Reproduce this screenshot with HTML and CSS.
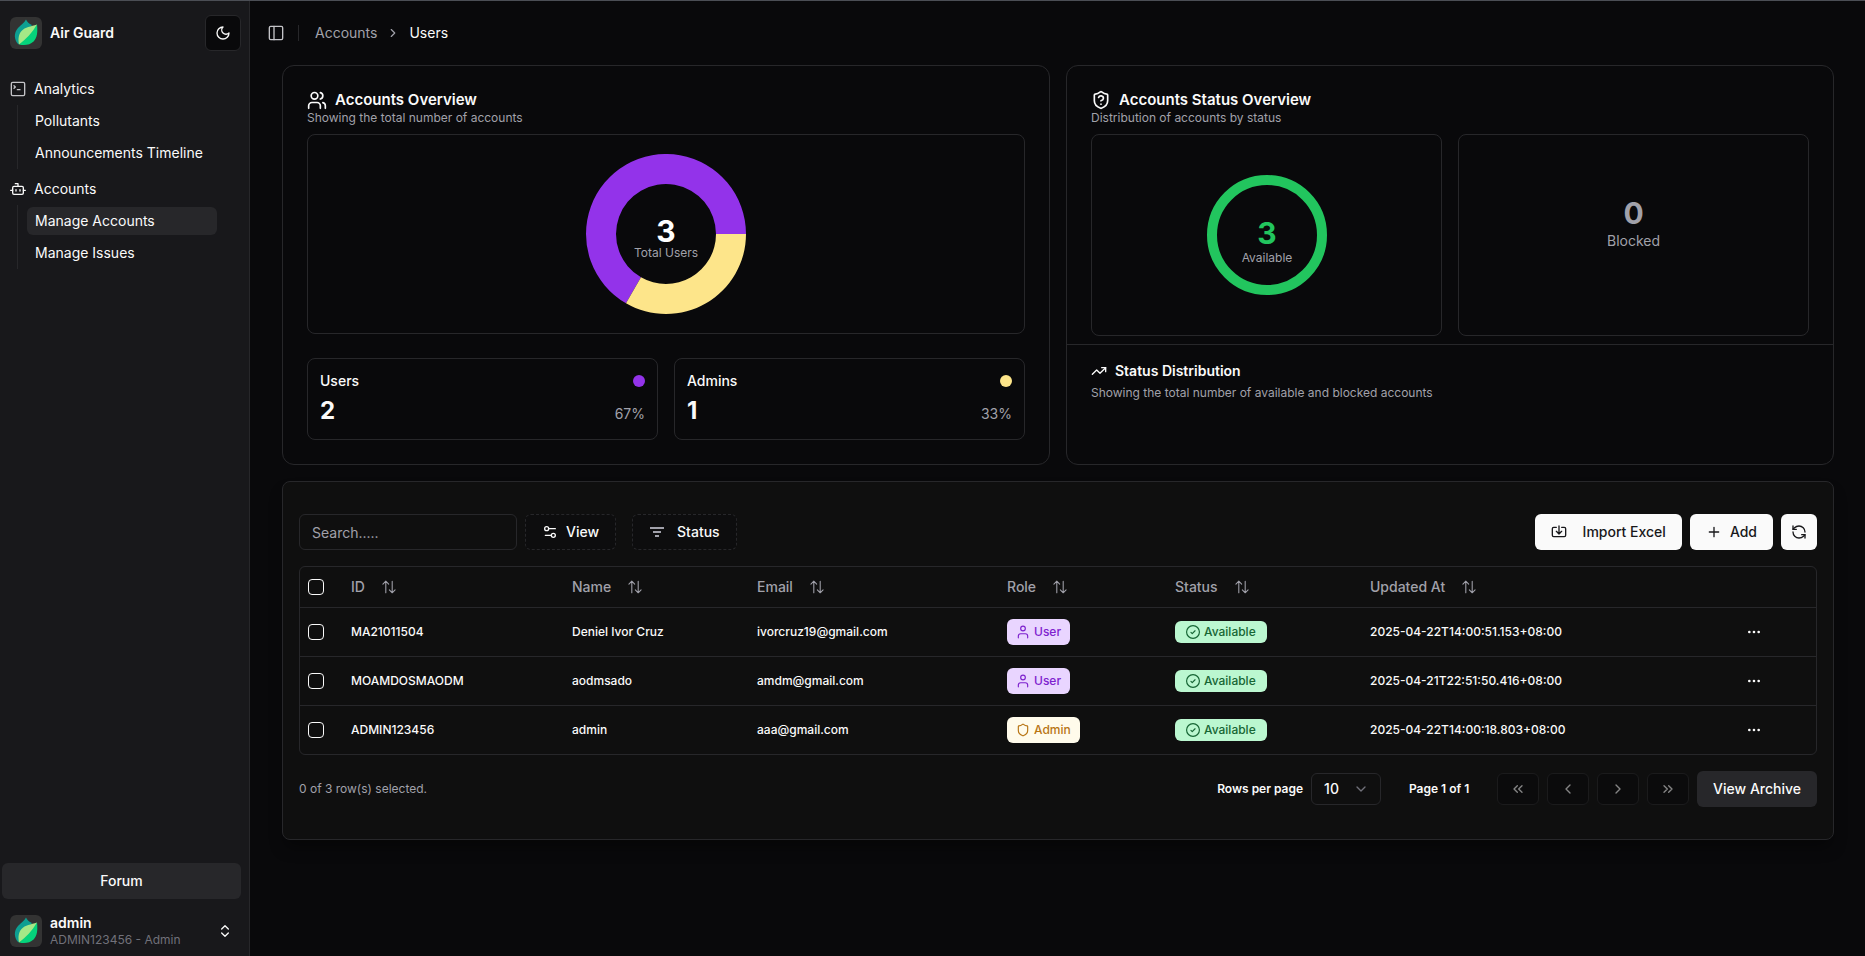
FILE: index.html
```html
<!DOCTYPE html>
<html lang="en">
<head>
	<meta charset="utf-8">
	<title>Air Guard - Users</title>
	<meta name="viewport" content="width=device-width, initial-scale=1">
	<link rel="stylesheet" href="styles.css">
</head>
<body>
	<!-- shared icons -->
	<svg class="sprite" aria-hidden="true">
		<symbol id="logo" viewBox="0 0 32 32">
			<path fill="#0d9f92" d="M16 2.500c-1.500 3.500-5 5-8 8.500-4.500 5-4 12 0.500 16.500L22 8c-3-1.200-4.800-3-6-5.500z"/>
			<path fill="#05d27b" d="M27 7.500c.8 8 .2 13-3.500 17-3.500 3.500-8.500 4.300-14.500 3L27 7.500z"/>
			<path fill="#a5e887" d="M27 7.500C21 9.500 15 10 11.500 14 8.500 17.500 8 22 9 27.500 16 22 22 16 27 7.500z"/>
		</symbol>
		<symbol id="sort" viewBox="0 0 15 15">
			<path d="M4.500 12.800V2M1.800 4.800l2.700-2.700 2.700 2.700M10.500 2.200v10.600M7.800 10.200l2.700 2.700 2.700-2.700"/>
		</symbol>
		<symbol id="user" viewBox="0 0 24 24">
			<circle cx="12" cy="6" r="4"/><path d="M20 22v-3a4 4 0 0 0-4-4H8a4 4 0 0 0-4 4v3"/>
		</symbol>
		<symbol id="shield" viewBox="0 0 24 24">
			<path d="M20 13c0 5-3.500 7.500-7.660 8.950a1 1 0 0 1-.67-.01C7.500 20.500 4 18 4 13V6a1 1 0 0 1 1-1c2 0 4.500-1.200 6.240-2.720a1.170 1.170 0 0 1 1.520 0C14.510 3.810 17 5 19 5a1 1 0 0 1 1 1z"/>
		</symbol>
		<symbol id="check" viewBox="0 0 24 24">
			<circle cx="12" cy="12" r="11"/><path d="m8.500 12.500 2.200 2.200 4.800-4.800"/>
		</symbol>
		<symbol id="dots" viewBox="0 0 24 24">
			<circle cx="5" cy="12" r="1"/><circle cx="12" cy="12" r="1"/><circle cx="19" cy="12" r="1"/>
		</symbol>
	</svg>

	<div class="app">
		<aside class="sidebar">
			<div class="brand">
				<span class="logo"><svg><use href="#logo"/></svg></span>
				<strong>Air Guard</strong>
				<button type="button" class="theme-btn" aria-label="Toggle theme">
					<svg class="icon" viewBox="0 0 24 24"><path d="M12 3a6 6 0 0 0 9 9 9 9 0 1 1-9-9Z"/></svg>
				</button>
			</div>

			<nav class="nav">
				<div class="nav-title">
					<svg class="icon" viewBox="0 0 24 24"><path d="m6 11 2-2-2-2M11 13h4"/><rect width="20" height="20" x="2" y="2" rx="2"/></svg>
					Analytics
				</div>
				<ul>
					<li><a href="#">Pollutants</a></li>
					<li><a href="#">Announcements Timeline</a></li>
				</ul>
				<div class="nav-title">
					<svg class="icon" viewBox="0 0 24 24"><path d="M12 8V4H8M1 14h3M20 14h3M15 13v2M9 13v2"/><rect width="16" height="12" x="4" y="8" rx="2"/></svg>
					Accounts
				</div>
				<ul>
					<li><a href="#" class="active">Manage Accounts</a></li>
					<li><a href="#">Manage Issues</a></li>
				</ul>
			</nav>

			<button type="button" class="forum-btn">Forum</button>
			<button type="button" class="account">
				<span class="logo"><svg><use href="#logo"/></svg></span>
				<span class="account-text">
					<strong>admin</strong>
					<small>ADMIN123456 - Admin</small>
				</span>
				<svg class="icon" viewBox="0 0 24 24"><path d="m7 15 5 5 5-5M7 9l5-5 5 5"/></svg>
			</button>
		</aside>

		<main class="main">
			<header class="topbar">
				<button type="button" class="plain-btn" aria-label="Toggle sidebar">
					<svg class="icon" viewBox="0 0 24 24"><rect width="20" height="20" x="2" y="2" rx="2"/><path d="M9 2v20"/></svg>
				</button>
				<span class="divider"></span>
				<nav class="breadcrumb" aria-label="Breadcrumb">
					<a href="#">Accounts</a>
					<svg class="icon" viewBox="0 0 24 24"><path d="m9 18 6-6-6-6"/></svg>
					<span>Users</span>
				</nav>
			</header>

			<div class="content">
				<div class="overview">
					<section class="card">
						<h2>
							<svg class="icon" viewBox="0 0 24 24"><path d="M16 22v-3a4 4 0 0 0-4-4H6a4 4 0 0 0-4 4v3"/><circle cx="9" cy="7" r="4"/><path d="M22 22v-3a4 4 0 0 0-3-3.870M16 3.130a4 4 0 0 1 0 7.750"/></svg>
							Accounts Overview
						</h2>
						<p class="sub">Showing the total number of accounts</p>
						<div class="box chart-box">
							<svg class="donut" viewBox="0 0 160 160">
								<path fill="#9333ea" d="M160 80A80 80 0 1 0 40 149.280L55 123.300A50 50 0 1 1 130 80z"/>
								<path fill="#fde58a" d="M160 80A80 80 0 0 1 40 149.280L55 123.300A50 50 0 0 0 130 80z"/>
								<text x="80" y="88" class="chart-num">3</text>
								<text x="80" y="103" class="chart-label">Total Users</text>
							</svg>
						</div>
						<div class="pair totals">
							<div class="box total">
								<div class="line"><span>Users</span><i class="dot purple"></i></div>
								<div class="line"><b>2</b><span class="percent">67%</span></div>
							</div>
							<div class="box total">
								<div class="line"><span>Admins</span><i class="dot yellow"></i></div>
								<div class="line"><b>1</b><span class="percent">33%</span></div>
							</div>
						</div>
					</section>

					<section class="card">
						<h2>
							<svg class="icon" viewBox="0 0 24 24"><path d="M20 13c0 5-3.500 7.500-7.660 8.950a1 1 0 0 1-.67-.01C7.500 20.500 4 18 4 13V6a1 1 0 0 1 1-1c2 0 4.500-1.200 6.240-2.720a1.170 1.170 0 0 1 1.520 0C14.510 3.810 17 5 19 5a1 1 0 0 1 1 1z"/><path d="M9.100 9a3 3 0 0 1 5.820 1c0 2-3 3-3 3M12 17h.01"/></svg>
							Accounts Status Overview
						</h2>
						<p class="sub">Distribution of accounts by status</p>
						<div class="pair">
							<div class="box status-box">
								<svg class="ring" viewBox="0 0 120 120">
									<circle cx="60" cy="60" r="55" fill="none" stroke="#22c55e" stroke-width="10"/>
									<text x="60" y="69" class="chart-num green">3</text>
									<text x="60" y="87" class="chart-label">Available</text>
								</svg>
							</div>
							<div class="box blocked">
								<b>0</b>
								<span>Blocked</span>
							</div>
						</div>
						<footer class="card-footer">
							<h3>
								<svg class="icon" viewBox="0 0 24 24"><path d="m22 7-8.500 8.500-5-5L2 17"/><path d="M16 7h6v6"/></svg>
								Status Distribution
							</h3>
							<p class="sub">Showing the total number of available and blocked accounts</p>
						</footer>
					</section>
				</div>

				<section class="table-card">
					<div class="toolbar">
						<input type="text" class="search" placeholder="Search....." aria-label="Search">
						<button type="button" class="btn dashed">
							<svg class="icon" viewBox="0 0 24 24"><path d="M20 7h-9M14 17H5"/><circle cx="17" cy="17" r="3"/><circle cx="7" cy="7" r="3"/></svg>
							View
						</button>
						<button type="button" class="btn dashed status">
							<svg class="icon bars" viewBox="0 0 16 16"><path d="M1 4h14M4 8h8M6 12h4"/></svg>
							Status
						</button>
						<div class="actions">
							<button type="button" class="btn light import">
								<svg class="icon" viewBox="0 0 24 24"><path d="M12 3v12M8 11l4 4 4-4M8 5H4a2 2 0 0 0-2 2v10a2 2 0 0 0 2 2h16a2 2 0 0 0 2-2V7a2 2 0 0 0-2-2h-4"/></svg>
								Import Excel
							</button>
							<button type="button" class="btn light">
								<svg class="icon" viewBox="0 0 24 24"><path d="M5 12h14M12 5v14"/></svg>
								Add
							</button>
							<button type="button" class="btn light square" aria-label="Refresh">
								<svg class="icon" viewBox="0 0 24 24"><path d="M21 12a9 9 0 0 0-9-9 9.750 9.750 0 0 0-6.740 2.740L3 8"/><path d="M3 3v5h5M3 12a9 9 0 0 0 9 9 9.750 9.750 0 0 0 6.740-2.740L21 16"/><path d="M16 16h5v5"/></svg>
							</button>
						</div>
					</div>

					<div class="table-wrap">
						<table>
							<colgroup>
								<col class="c-check"><col class="c-id"><col class="c-name"><col class="c-email"><col class="c-role"><col class="c-status"><col class="c-date"><col class="c-menu">
							</colgroup>
							<thead>
								<tr>
									<th><input type="checkbox" aria-label="Select all"></th>
									<th><button type="button">ID <svg><use href="#sort"/></svg></button></th>
									<th><button type="button">Name <svg><use href="#sort"/></svg></button></th>
									<th><button type="button">Email <svg><use href="#sort"/></svg></button></th>
									<th><button type="button">Role <svg><use href="#sort"/></svg></button></th>
									<th><button type="button">Status <svg><use href="#sort"/></svg></button></th>
									<th><button type="button">Updated At <svg><use href="#sort"/></svg></button></th>
									<th></th>
								</tr>
							</thead>
							<tbody>
								<tr>
									<td><input type="checkbox" aria-label="Select MA21011504"></td>
									<td>MA21011504</td>
									<td>Deniel Ivor Cruz</td>
									<td>ivorcruz19@gmail.com</td>
									<td><span class="badge user"><svg class="icon"><use href="#user"/></svg>User</span></td>
									<td><span class="badge available"><svg class="icon"><use href="#check"/></svg>Available</span></td>
									<td>2025-04-22T14:00:51.153+08:00</td>
									<td><button type="button" class="row-menu" aria-label="Open menu"><svg class="icon"><use href="#dots"/></svg></button></td>
								</tr>
								<tr>
									<td><input type="checkbox" aria-label="Select MOAMDOSMAODM"></td>
									<td>MOAMDOSMAODM</td>
									<td>aodmsado</td>
									<td>amdm@gmail.com</td>
									<td><span class="badge user"><svg class="icon"><use href="#user"/></svg>User</span></td>
									<td><span class="badge available"><svg class="icon"><use href="#check"/></svg>Available</span></td>
									<td>2025-04-21T22:51:50.416+08:00</td>
									<td><button type="button" class="row-menu" aria-label="Open menu"><svg class="icon"><use href="#dots"/></svg></button></td>
								</tr>
								<tr>
									<td><input type="checkbox" aria-label="Select ADMIN123456"></td>
									<td>ADMIN123456</td>
									<td>admin</td>
									<td>aaa@gmail.com</td>
									<td><span class="badge admin"><svg class="icon"><use href="#shield"/></svg>Admin</span></td>
									<td><span class="badge available"><svg class="icon"><use href="#check"/></svg>Available</span></td>
									<td>2025-04-22T14:00:18.803+08:00</td>
									<td><button type="button" class="row-menu" aria-label="Open menu"><svg class="icon"><use href="#dots"/></svg></button></td>
								</tr>
							</tbody>
						</table>
					</div>

					<div class="pagination">
						<span class="selected">0 of 3 row(s) selected.</span>
						<label for="rows">Rows per page</label>
						<span class="select">
							<select id="rows">
								<option>10</option>
								<option>20</option>
								<option>50</option>
							</select>
							<svg class="icon" viewBox="0 0 24 24"><path d="m6 9 6 6 6-6"/></svg>
						</span>
						<span class="page">Page 1 of 1</span>
						<div class="pages">
							<button type="button" disabled aria-label="First page"><svg class="icon" viewBox="0 0 24 24"><path d="m11 17-5-5 5-5M18 17l-5-5 5-5"/></svg></button>
							<button type="button" disabled aria-label="Previous page"><svg class="icon" viewBox="0 0 24 24"><path d="m15 18-6-6 6-6"/></svg></button>
							<button type="button" disabled aria-label="Next page"><svg class="icon" viewBox="0 0 24 24"><path d="m9 18 6-6-6-6"/></svg></button>
							<button type="button" disabled aria-label="Last page"><svg class="icon" viewBox="0 0 24 24"><path d="m6 17 5-5-5-5M13 17l5-5-5-5"/></svg></button>
							<button type="button" class="btn archive">View Archive</button>
						</div>
					</div>
				</section>
			</div>
		</main>
	</div>
</body>
</html>
```
FILE: styles.css
```css
* {
	box-sizing: border-box;
}

body {
	margin: 0;
	background-color: #09090b;
	color: #fafafa;
	font-family: Inter, "Liberation Sans", sans-serif;
	font-size: 14px;
	line-height: 20px;
	border-top: 1px solid #4b4e55;
}

h2, h3, p, ul {
	margin: 0;
	padding: 0;
}

a {
	color: inherit;
	text-decoration: none;
}

button, input, select {
	font: inherit;
	color: inherit;
}

button {
	padding: 0;
	border: none;
	background: none;
	cursor: pointer;
}

.sprite {
	display: none;
}

.icon {
	width: 16px;
	height: 16px;
	flex-shrink: 0;
	fill: none;
	stroke: currentColor;
	stroke-width: 2;
	stroke-linecap: round;
	stroke-linejoin: round;
}

.app {
	display: flex;
	min-height: calc(100vh - 1px);
}

/* sidebar */
.sidebar {
	display: flex;
	flex-direction: column;
	width: 250px;
	flex-shrink: 0;
	padding: 14px 8px 8px 2px;
	background-color: #18181b;
	border-right: 1px solid #27272a;
}

.brand, .account {
	display: flex;
	align-items: center;
	padding-left: 8px;
	gap: 8px;
	text-align: left;
}

.brand strong, .account strong {
	font-weight: 600;
}

.logo {
	width: 32px;
	height: 32px;
	flex-shrink: 0;
	border-radius: 6px;
	background-color: #333;
}

.logo svg {
	display: block;
	width: 32px;
	height: 32px;
}

.theme-btn {
	display: flex;
	align-items: center;
	justify-content: center;
	width: 36px;
	height: 36px;
	margin-left: auto;
	border: 1px solid #27272a;
	border-radius: 6px;
	background-color: #09090b;
}

.nav {
	flex: 1;
	padding: 22px 24px 0 8px;
}

.nav-title {
	display: flex;
	align-items: center;
	gap: 8px;
	height: 32px;
}

.nav-title:first-child .icon {
	color: #c4c4c8;
}

.nav ul {
	list-style: none;
	margin: 0 0 4px 7px;
	padding: 0 0 0 9px;
	border-left: 1px solid #27272a;
}

.nav li {
	padding: 2px 0;
}

.nav li a {
	display: block;
	padding: 4px 8px;
	border-radius: 6px;
}

.nav li a.active {
	background-color: #27272a;
}

.forum-btn {
	height: 36px;
	margin-bottom: 15px;
	border-radius: 6px;
	background-color: #27272a;
	font-weight: 500;
}

.account {
	padding-right: 8px;
}

.account-text {
	display: flex;
	flex: 1;
	flex-direction: column;
}

.account-text strong, .account-text small {
	line-height: 17px;
}

.account-text small {
	color: #71717a;
	font-size: 12px;
}

/* top bar */
.main {
	flex: 1;
	min-width: 0;
}

.topbar {
	display: flex;
	align-items: center;
	height: 64px;
	padding-left: 18px;
}

.plain-btn {
	display: flex;
	color: #c4c4c8;
}

.divider {
	width: 1px;
	height: 16px;
	margin: 0 16px 0 14px;
	background-color: #27272a;
}

.breadcrumb {
	display: flex;
	align-items: center;
	gap: 9px;
	color: #a1a1aa;
}

.breadcrumb .icon {
	width: 14px;
	height: 14px;
}

.breadcrumb span {
	color: #fafafa;
}

.content {
	padding: 0 31px 32px 32px;
}

/* overview cards */
.overview {
	display: grid;
	grid-template-columns: 1fr 1fr;
	gap: 16px;
	margin-bottom: 16px;
}

.card {
	display: flex;
	flex-direction: column;
	padding: 24px;
	border: 1px solid #27272a;
	border-radius: 12px;
}

.card h2 {
	display: flex;
	align-items: center;
	gap: 8px;
	font-size: 15px;
	font-weight: 600;
	line-height: 20px;
}

.card h2 .icon {
	width: 20px;
	height: 20px;
}

.sub {
	color: #a1a1aa;
	font-size: 12px;
	line-height: 16px;
}

.box {
	border: 1px solid #27272a;
	border-radius: 8px;
}

.chart-box {
	display: flex;
	justify-content: center;
	margin-top: 8px;
	padding: 19px 0;
}

.donut {
	display: block;
	width: 160px;
	height: 160px;
}

.chart-num {
	fill: #fff;
	font-size: 30px;
	font-weight: 700;
	text-anchor: middle;
}

.chart-num.green {
	fill: #22c55e;
}

.chart-label {
	fill: #a1a1aa;
	font-size: 12px;
	text-anchor: middle;
}

.pair {
	display: grid;
	grid-template-columns: 1fr 1fr;
	gap: 16px;
	margin-top: 8px;
}

.pair.totals {
	margin-top: 24px;
}

.total {
	padding: 12px;
	font-weight: 500;
}

.line {
	display: flex;
	align-items: center;
	justify-content: space-between;
}

.total b {
	margin-top: 4px;
	font-size: 24px;
	line-height: 32px;
}

.percent {
	align-self: flex-end;
	padding-bottom: 3px;
	color: #a1a1aa;
	font-weight: 400;
}

.dot {
	width: 12px;
	height: 12px;
	border-radius: 50%;
}

.dot.purple {
	background-color: #9333ea;
}

.dot.yellow {
	background-color: #fde58a;
}

.status-box {
	display: flex;
	justify-content: center;
	padding: 40px 0;
}

.ring {
	display: block;
	width: 120px;
	height: 120px;
}

.blocked {
	display: flex;
	flex-direction: column;
	align-items: center;
	padding-top: 60px;
	color: #a1a1aa;
}

.blocked b {
	font-size: 30px;
	line-height: 36px;
}

.card-footer {
	margin: 8px -24px 0;
	padding: 16px 24px 0;
	border-top: 1px solid #27272a;
}

.card-footer h3 {
	display: flex;
	align-items: center;
	gap: 8px;
	margin-bottom: 4px;
	font-size: 14px;
	font-weight: 600;
}

/* accounts table */
.table-card {
	padding: 32px 16px;
	border: 1px solid #27272a;
	border-radius: 8px;
	background-color: #0f0f0f;
	box-shadow: 0 10px 15px -3px rgba(0, 0, 0, 0.4);
}

.toolbar {
	display: flex;
	gap: 8px;
	margin-bottom: 16px;
}

.search {
	width: 218px;
	height: 36px;
	padding: 0 12px;
	border: 1px solid #27272a;
	border-radius: 6px;
	background: none;
}

.search::placeholder {
	color: #a1a1aa;
}

.btn {
	display: flex;
	align-items: center;
	height: 36px;
	padding: 0 16px;
	gap: 8px;
	border-radius: 6px;
	font-weight: 500;
}

.btn.dashed {
	border: 1px dashed #27272a;
	background-color: #0d0d0e;
}

.btn.status {
	margin-left: 8px;
	gap: 12px;
}

.bars {
	color: #a1a1aa;
	stroke-linecap: butt;
}

.btn.light {
	background-color: #fafafa;
	color: #18181b;
}

.btn.import {
	gap: 16px;
}

.btn.square {
	justify-content: center;
	width: 36px;
	padding: 0;
}

.actions {
	display: flex;
	gap: 8px;
	margin-left: auto;
}

.table-wrap {
	border: 1px solid #27272a;
	border-radius: 6px;
}

table {
	width: 100%;
	table-layout: fixed;
	border-collapse: collapse;
}

.c-check { width: 43px; }
.c-id { width: 221px; }
.c-name { width: 185px; }
.c-email { width: 250px; }
.c-role { width: 168px; }
.c-status { width: 195px; }
.c-date { width: 368px; }
.c-menu { width: 86px; }

th, td {
	padding: 0 8px;
	text-align: left;
	vertical-align: middle;
}

th {
	height: 40px;
	color: #a1a1aa;
	font-weight: 500;
}

th button {
	display: flex;
	align-items: center;
	gap: 16px;
}

th svg {
	width: 16px;
	height: 16px;
	fill: none;
	stroke: currentColor;
	stroke-linecap: round;
	stroke-linejoin: round;
}

tbody tr {
	border-top: 1px solid #27272a;
}

td {
	height: 49px;
	font-size: 12px;
	font-weight: 500;
}

input[type="checkbox"] {
	display: block;
	appearance: none;
	width: 16px;
	height: 16px;
	margin: 0;
	border: 1px solid #fafafa;
	border-radius: 4px;
}

input[type="checkbox"]:checked {
	background-color: #fafafa;
}

.badge {
	display: inline-flex;
	align-items: center;
	gap: 4px;
	padding: 3px 9px;
	border-radius: 6px;
	line-height: 20px;
	vertical-align: middle;
}

.badge .icon {
	width: 14px;
	height: 14px;
}

.badge.user {
	background-color: #e9d5ff;
	color: #7e22ce;
}

.badge.admin {
	background-color: #fffbeb;
	color: #b87514;
}

.badge.available {
	padding: 1px 11px;
	background-color: #bbf7d0;
	color: #166534;
}

.row-menu {
	display: flex;
	align-items: center;
	justify-content: center;
	width: 32px;
	height: 32px;
}

/* pagination */
.pagination {
	display: flex;
	align-items: center;
	gap: 8px;
	margin-top: 16px;
	font-size: 12px;
	font-weight: 600;
}

.selected {
	flex: 1;
	color: #a1a1aa;
	font-weight: 400;
}

.select {
	display: grid;
	align-items: center;
	width: 70px;
}

.select select, .select .icon {
	grid-area: 1 / 1;
}

.select select {
	appearance: none;
	height: 32px;
	padding: 0 12px;
	border: 1px solid #27272a;
	border-radius: 6px;
	background-color: #0f0f0f;
	font-size: 14px;
	font-weight: 500;
}

.select .icon {
	justify-self: end;
	margin-right: 12px;
	color: #71717a;
	pointer-events: none;
}

.page {
	width: 100px;
	text-align: center;
}

.pages {
	display: flex;
	align-items: center;
	gap: 8px;
}

.pages button:disabled {
	display: flex;
	align-items: center;
	justify-content: center;
	width: 42px;
	height: 32px;
	border: 1px solid #27272a;
	border-radius: 6px;
	background-color: #09090b;
	opacity: 0.5;
}

.archive {
	background-color: #27272a;
	font-size: 14px;
}
```
